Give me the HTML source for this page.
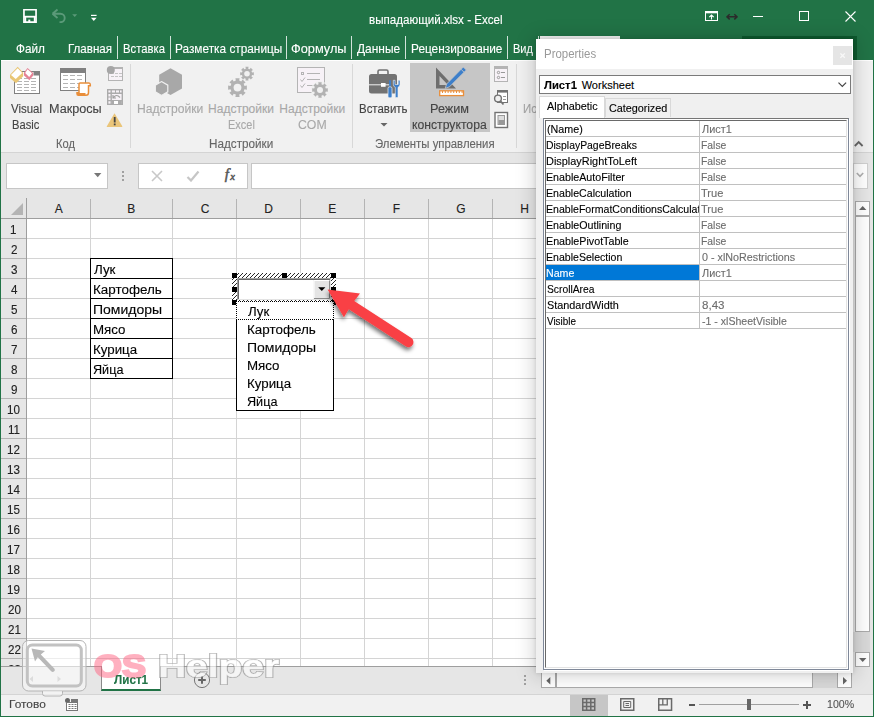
<!DOCTYPE html>
<html lang="ru">
<head>
<meta charset="utf-8">
<title>выпадающий.xlsx - Excel</title>
<style>
*{box-sizing:border-box;margin:0;padding:0}
html,body{width:874px;height:717px;overflow:hidden;background:#217346}
body{font-family:"Liberation Sans",sans-serif;font-size:12px;color:#444}
#app{position:absolute;left:0;top:0;width:874px;height:717px;overflow:hidden;background:#217346}
#app div,#app span,#app svg{position:absolute}
.t{white-space:pre;line-height:1;transform-origin:0 0;display:block;-webkit-text-stroke:0.12px currentColor}

</style>
</head>
<body>
<div id="app">
<!-- title bar -->
<div style="left:0px;top:0px;width:874px;height:60px;background:#217346;"></div>
<svg style="left:23px;top:9px;" width="14" height="14" viewBox="0 0 14 14"><path d="M0.95 0.75h12.1v12.300h-12.1z" fill="none" stroke="#fff" stroke-width="1.700"/><rect x="1" y="6.800" width="12" height="1.800" fill="#fff"/><rect x="1.500" y="8" width="1.700" height="5" fill="#fff"/><rect x="10.800" y="8" width="1.700" height="5" fill="#fff"/><rect x="5.300" y="10.600" width="2" height="2.500" fill="#fff"/></svg>
<svg style="left:51px;top:8px;" width="28" height="15" viewBox="0 0 28 15"><path d="M1.500 5.800 L6.500 1.500 M1.500 5.800 L6.500 10 M2 5.800 H9.500 a4.200 4.200 0 0 1 0 8.400 H8.500" fill="none" stroke="#5b9a79" stroke-width="1.900" stroke-linejoin="round"/><path d="M21.200 6.300h5l-2.500 2.800z" fill="#5b9a79"/></svg>
<svg style="left:90px;top:14px;" width="8" height="8" viewBox="0 0 8 8"><rect x="1" y="0.800" width="5.600" height="1.200" fill="#fff"/><path d="M1 3.700h5.600L3.800 7z" fill="#fff"/></svg>
<span class="t" style="left:368.83px;top:14.00px;font-size:12px;color:#fff;transform:scaleX(0.9672);">выпадающий.xlsx - Excel</span>
<svg style="left:705px;top:11px;" width="13" height="10" viewBox="0 0 13 10"><rect x="0.5" y="0.5" width="12" height="9" fill="none" stroke="#fff" stroke-width="1"/><rect x="0.5" y="0.5" width="12" height="1.800" fill="#fff"/><path d="M6.500 4.200 L6.500 8.500 M4.300 6.200 L6.500 4 L8.700 6.200" fill="none" stroke="#fff" stroke-width="1.1"/></svg>
<svg style="left:726px;top:12px;" width="12" height="9" viewBox="0 0 12 9"><path d="M1.500 4.800H10.500M3.700 2.200L1 4.800L3.700 7.400M8.300 2.200L11 4.800L8.300 7.400" fill="none" stroke="#2b2b2b" stroke-width="1.500"/></svg>
<div style="left:753px;top:16px;width:10px;height:1px;background:#fff;"></div>
<div style="left:799px;top:11px;width:10px;height:10px;border:1px solid #fff;"></div>
<svg style="left:845px;top:11px;" width="11" height="11" viewBox="0 0 11 11"><path d="M0.5 0.5L10.5 10.5M10.5 0.5L0.5 10.5" stroke="#fff" stroke-width="1.1" fill="none"/></svg>
<span class="t" style="left:15.90px;top:42.00px;font-size:13px;color:#fff;transform:scaleX(0.9032);">Файл</span>
<span class="t" style="left:68.11px;top:42.00px;font-size:13px;color:#fff;transform:scaleX(0.8896);">Главная</span>
<span class="t" style="left:122.93px;top:42.00px;font-size:13px;color:#fff;transform:scaleX(0.8681);">Вставка</span>
<span class="t" style="left:175.39px;top:42.00px;font-size:13px;color:#fff;transform:scaleX(0.9095);">Разметка страницы</span>
<span class="t" style="left:291.32px;top:42.00px;font-size:13px;color:#fff;transform:scaleX(0.9818);">Формулы</span>
<span class="t" style="left:357.30px;top:42.00px;font-size:13px;color:#fff;transform:scaleX(0.9191);">Данные</span>
<span class="t" style="left:411.19px;top:42.00px;font-size:13px;color:#fff;transform:scaleX(0.9111);">Рецензирование</span>
<span class="t" style="left:512.95px;top:42.00px;font-size:13px;color:#fff;transform:scaleX(0.8478);">Вид</span>
<div style="left:117px;top:36px;width:1px;height:23px;background:rgba(255,255,255,.8);"></div>
<div style="left:170px;top:36px;width:1px;height:23px;background:rgba(255,255,255,.8);"></div>
<div style="left:286px;top:36px;width:1px;height:23px;background:rgba(255,255,255,.8);"></div>
<div style="left:351px;top:36px;width:1px;height:23px;background:rgba(255,255,255,.8);"></div>
<div style="left:405px;top:36px;width:1px;height:23px;background:rgba(255,255,255,.8);"></div>
<div style="left:507px;top:36px;width:1px;height:23px;background:rgba(255,255,255,.8);"></div>
<!-- ribbon -->
<div style="left:1px;top:60px;width:872px;height:93px;background:#f1f1f1;border-top:1px solid #fff;border-bottom:1px solid #d4d4d4;"></div>
<div style="left:130px;top:64px;width:1px;height:84px;background:#d8d8d8;"></div>
<div style="left:352px;top:64px;width:1px;height:84px;background:#d8d8d8;"></div>
<div style="left:516px;top:64px;width:1px;height:84px;background:#d8d8d8;"></div>
<div style="left:410px;top:63px;width:80px;height:69px;background:#c6c6c6;"></div>
<span class="t" style="left:10.80px;top:103.00px;font-size:12px;color:#444;transform:scaleX(0.9531);">Visual</span>
<span class="t" style="left:11.87px;top:119.00px;font-size:12px;color:#444;transform:scaleX(0.9286);">Basic</span>
<span class="t" style="left:48.75px;top:103.00px;font-size:12px;color:#444;transform:scaleX(1.0510);">Макросы</span>
<span class="t" style="left:55.88px;top:138.00px;font-size:12px;color:#666;transform:scaleX(0.9250);">Код</span>
<span class="t" style="left:136.79px;top:103.00px;font-size:12px;color:#a8a8a8;transform:scaleX(1.0077);">Надстройки</span>
<span class="t" style="left:208.10px;top:103.00px;font-size:12px;color:#a8a8a8;">Надстройки</span>
<span class="t" style="left:227.79px;top:119.00px;font-size:12px;color:#a8a8a8;transform:scaleX(0.9143);">Excel</span>
<span class="t" style="left:279.30px;top:103.00px;font-size:12px;color:#a8a8a8;">Надстройки</span>
<span class="t" style="left:298.30px;top:119.00px;font-size:12px;color:#a8a8a8;transform:scaleX(1.0222);">COM</span>
<span class="t" style="left:208.92px;top:138.00px;font-size:12px;color:#666;transform:scaleX(0.9754);">Надстройки</span>
<span class="t" style="left:358.65px;top:103.00px;font-size:12px;color:#444;transform:scaleX(0.9540);">Вставить</span>
<svg style="left:380px;top:123px;" width="8" height="4" viewBox="0 0 8 4"><path d="M0.5 0h7L4 3.6z" fill="#666"/></svg>
<span class="t" style="left:430.24px;top:103.00px;font-size:12px;color:#444;transform:scaleX(1.0556);">Режим</span>
<span class="t" style="left:411.78px;top:119.00px;font-size:12px;color:#444;transform:scaleX(1.0164);">конструктора</span>
<span class="t" style="left:374.55px;top:138.00px;font-size:12px;color:#666;transform:scaleX(0.9464);">Элементы управления</span>
<span class="t" style="left:523.05px;top:103.00px;font-size:12px;color:#a8a8a8;transform:scaleX(0.9500);">Ис</span>
<svg style="left:0;top:60px" width="540" height="93" viewBox="0 60 540 93"><rect x="14.5" y="71.5" width="25" height="22" fill="#fff" stroke="#808080"/><rect x="33.5" y="71" width="6.5" height="4.5" fill="#808080"/><rect x="17" y="78" width="5" height="1" fill="#b4b4b4"/><rect x="24" y="78" width="5" height="1" fill="#b4b4b4"/><rect x="31" y="78" width="5" height="1" fill="#b4b4b4"/><rect x="17" y="81" width="5" height="1" fill="#b4b4b4"/><rect x="24" y="81" width="5" height="1" fill="#b4b4b4"/><rect x="31" y="81" width="5" height="1" fill="#b4b4b4"/><rect x="17" y="84" width="5" height="1" fill="#b4b4b4"/><rect x="24" y="84" width="5" height="1" fill="#b4b4b4"/><rect x="31" y="84" width="5" height="1" fill="#b4b4b4"/><rect x="17" y="87" width="5" height="1" fill="#b4b4b4"/><rect x="24" y="87" width="5" height="1" fill="#b4b4b4"/><rect x="31" y="87" width="5" height="1" fill="#b4b4b4"/><rect x="17" y="90" width="5" height="1" fill="#b4b4b4"/><rect x="24" y="90" width="5" height="1" fill="#b4b4b4"/><rect x="31" y="90" width="5" height="1" fill="#b4b4b4"/><path d="M17.700 66.800 L23.200 72.800 V76.300 L16 83.200 L10 78 V74.800 Z" fill="#e9c675"/><path d="M17.700 68.200 L22.200 73 L15.700 79 L11 75 Z" fill="#fff"/><path d="M27.500 68 L33.200 72.900 V75.500 L29.400 80.300 L24 75.500 V72.600 Z" fill="#e58295"/><path d="M27.500 69.300 L32 73.200 L29.200 76.900 L25.200 73 Z" fill="#fff"/><rect x="60.5" y="68.5" width="25" height="22" fill="#fff" stroke="#808080"/><rect x="60" y="68" width="26" height="5" fill="#808080"/><rect x="63" y="75" width="5" height="1" fill="#b4b4b4"/><rect x="70" y="75" width="5" height="1" fill="#b4b4b4"/><rect x="77" y="75" width="5" height="1" fill="#b4b4b4"/><rect x="63" y="79" width="5" height="1" fill="#b4b4b4"/><rect x="70" y="79" width="5" height="1" fill="#b4b4b4"/><rect x="77" y="79" width="5" height="1" fill="#b4b4b4"/><rect x="63" y="83" width="5" height="1" fill="#b4b4b4"/><rect x="70" y="83" width="5" height="1" fill="#b4b4b4"/><rect x="77" y="83" width="5" height="1" fill="#b4b4b4"/><rect x="63" y="87" width="5" height="1" fill="#b4b4b4"/><rect x="70" y="87" width="5" height="1" fill="#b4b4b4"/><rect x="77" y="87" width="5" height="1" fill="#b4b4b4"/><path d="M80 83 H89 Q90.3 83 90.3 84.8 V85.8 H88.500 V92.500 Q88.500 95.300 86 95.300 H78.300 Q77 95.300 77 93.800 V92.700 H79 V84.500 Q79 83 80 83 Z" fill="#fff" stroke="#e98e3a" stroke-width="1.500"/><path d="M77 93 h8.500 v2 h-8 z" fill="#e98e3a"/><rect x="108.5" y="67.5" width="14" height="13" fill="#f7f2f7" stroke="#b4b4b4"/><rect x="113" y="67" width="10" height="2" fill="#b4b4b4"/><rect x="111" y="73" width="3" height="1" fill="#c4c4c4"/><rect x="115" y="73" width="3" height="1" fill="#c4c4c4"/><rect x="119" y="73" width="3" height="1" fill="#c4c4c4"/><rect x="111" y="76" width="3" height="1" fill="#c4c4c4"/><rect x="115" y="76" width="3" height="1" fill="#c4c4c4"/><rect x="119" y="76" width="3" height="1" fill="#c4c4c4"/><circle cx="110.8" cy="70" r="4" fill="#a6a6a6"/><rect x="107.700" y="89.700" width="14.600" height="14.600" fill="#f7f2f7" stroke="#ababab" stroke-width="1.400"/><path d="M107 93.2h16M111.2 89v16M107 100.6h16" stroke="#ababab" stroke-width="1.400" fill="none"/><path d="M115.5 89v4M119.500 89v4M107 97h4" stroke="#ababab" fill="none"/><rect x="111.800" y="101" width="10" height="3" fill="#ababab"/><rect x="114" y="101" width="4" height="3" fill="#fff"/><path d="M113.5 97.5 q3 -4 6.5 0 M113 95 v3 h3" stroke="#a0a0a0" fill="none" stroke-width="1.2"/><path d="M114.5 113.3 L122.3 126.3 Q122.6 127 121.8 127 H107.2 Q106.4 127 106.8 126.3 Z" fill="#eac57a"/><rect x="113.8" y="117" width="1.8" height="5.5" fill="#444"/><rect x="113.8" y="123.5" width="1.8" height="1.8" fill="#444"/><path d="M170.5 68.3 L182 74.8 V88.5 L170.5 95 L159.2 88.5 V74.8 Z" fill="#a8a8a8"/><path d="M161.5 81.6 L167.8 85.2 V91.8 L161.5 95.4 L155.3 91.8 V85.2 Z" fill="#a8a8a8" stroke="#f1f1f1" stroke-width="1.2"/><polygon points="246.87,85.51 246.87,89.69 244.50,89.28 243.64,91.36 245.61,92.74 242.64,95.71 241.26,93.74 239.18,94.60 239.59,96.97 235.41,96.97 235.82,94.60 233.74,93.74 232.36,95.71 229.39,92.74 231.36,91.36 230.50,89.28 228.13,89.69 228.13,85.51 230.50,85.92 231.36,83.84 229.39,82.46 232.36,79.49 233.74,81.46 235.82,80.60 235.41,78.23 239.59,78.23 239.18,80.60 241.26,81.46 242.64,79.49 245.61,82.46 243.64,83.84 244.50,85.92" fill="#b2b2b2"/><circle cx="237.5" cy="87.6" r="3.9" fill="#f1f1f1"/><polygon points="253.83,72.17 253.83,75.23 252.06,74.91 251.43,76.42 252.91,77.45 250.75,79.61 249.72,78.13 248.21,78.76 248.53,80.53 245.47,80.53 245.79,78.76 244.28,78.13 243.25,79.61 241.09,77.45 242.57,76.42 241.94,74.91 240.17,75.23 240.17,72.17 241.94,72.49 242.57,70.98 241.09,69.95 243.25,67.79 244.28,69.27 245.79,68.64 245.47,66.87 248.53,66.87 248.21,68.64 249.72,69.27 250.75,67.79 252.91,69.95 251.43,70.98 252.06,72.49" fill="#b2b2b2"/><circle cx="247" cy="73.7" r="2.8" fill="#f1f1f1"/><rect x="297.5" y="67.5" width="27" height="25" fill="#f7f2f7" stroke="#b4b4b4"/><rect x="301.5" y="72.5" width="2" height="2" fill="none" stroke="#b4b4b4"/><path d="M307 73.5h13M307 79.5h13M307 85.5h6" stroke="#b4b4b4"/><path d="M300.5 79.5l1.5 2l3-4M300.5 85.5l1.5 2l3-4" stroke="#b4b4b4" fill="none"/><circle cx="320" cy="90" r="9" fill="#f1f1f1"/><polygon points="327.81,88.25 327.81,91.75 325.83,91.40 325.12,93.13 326.75,94.29 324.29,96.75 323.13,95.12 321.40,95.83 321.75,97.81 318.25,97.81 318.60,95.83 316.87,95.12 315.71,96.75 313.25,94.29 314.88,93.13 314.17,91.40 312.19,91.75 312.19,88.25 314.17,88.60 314.88,86.87 313.25,85.71 315.71,83.25 316.87,84.88 318.60,84.17 318.25,82.19 321.75,82.19 321.40,84.17 323.13,84.88 324.29,83.25 326.75,85.71 325.12,86.87 325.83,88.60" fill="#b2b2b2"/><circle cx="320" cy="90" r="3" fill="#f1f1f1"/><path d="M378 74.5 V71.5 Q378 70 379.5 70 H386.5 Q388 70 388 71.5 V74.5" fill="none" stroke="#737373" stroke-width="1.6"/><rect x="369" y="74" width="28" height="19.5" rx="2.5" fill="#737373"/><rect x="369" y="84.3" width="21" height="1" fill="#f1f1f1"/><rect x="381" y="83" width="4.6" height="3.8" fill="#fff"/><rect x="386.8" y="80" width="14" height="18" fill="#f1f1f1" opacity="0"/><rect x="387" y="80" width="14" height="14" fill="#f1f1f1" opacity="0"/><path d="M390 80.300 V87.500" stroke="#3d7fca" stroke-width="1.800"/><rect x="388" y="86.800" width="4" height="11" rx="1.600" fill="#3d7fca" stroke="#f1f1f1" stroke-width="0.700"/><path d="M393.3 80.300 V84.300 Q393.3 86.800 395.3 87.300 V97.600 H398 V87.300 Q400 86.800 400 84.300 V80.300 H398.2 V84.500 H395.1 V80.300 Z" fill="#3d7fca" stroke="#f1f1f1" stroke-width="0.600"/><path d="M436 67.5 L456 88.5 H436 Z M439.5 76 V85 H448 Z" fill="#6e6e6e" fill-rule="evenodd"/><path d="M463.3 67 L466.3 70 L449.5 86.8 L445.2 88.4 L446.6 84 Z" fill="#3d7fca" stroke="#c6c6c6" stroke-width="0.8"/><path d="M461.2 69.4 L464 72.2" stroke="#c6c6c6" stroke-width="0.9"/><rect x="439.7" y="90.8" width="23.8" height="4.8" fill="#fff" stroke="#e98e3a" stroke-width="1.3"/><rect x="442.0" y="91" width="1" height="2" fill="#e98e3a"/><rect x="444.8" y="91" width="1" height="2" fill="#e98e3a"/><rect x="447.6" y="91" width="1" height="2" fill="#e98e3a"/><rect x="450.4" y="91" width="1" height="2" fill="#e98e3a"/><rect x="453.2" y="91" width="1" height="2" fill="#e98e3a"/><rect x="456.0" y="91" width="1" height="2" fill="#e98e3a"/><rect x="458.8" y="91" width="1" height="2" fill="#e98e3a"/><rect x="461.6" y="91" width="1" height="2" fill="#e98e3a"/><rect x="494.5" y="66.5" width="13" height="15" fill="#f7f2f7" stroke="#b4b4b4"/><rect x="494" y="66" width="14" height="3" fill="#b4b4b4"/><circle cx="498.5" cy="72.5" r="1.2" fill="none" stroke="#999"/><circle cx="498.5" cy="77.5" r="1.2" fill="none" stroke="#999"/><path d="M501 72.5h4M501 77.5h4" stroke="#999"/><rect x="497.5" y="90.5" width="10" height="12" fill="#fff" stroke="#737373"/><rect x="497" y="90" width="11" height="2.6" fill="#737373"/><path d="M503 96.5h3M503 99.5h3" stroke="#999"/><circle cx="498" cy="98.5" r="3.4" fill="#f1f1f1" stroke="#737373" stroke-width="1.4"/><path d="M500.5 101.2 L503.5 104.5" stroke="#737373" stroke-width="1.8"/><rect x="495" y="112.5" width="12.5" height="15" fill="#fff" stroke="#737373" stroke-width="1.4"/><rect x="498" y="115.5" width="6.5" height="9" fill="#ddd" stroke="#999"/><rect x="498.5" y="120" width="5.5" height="4" fill="#999"/></svg>
<!-- formula bar -->
<div style="left:1px;top:153px;width:872px;height:45px;background:#e6e6e6;"></div>
<div style="left:6px;top:163px;width:102px;height:26px;background:#fff;border:1px solid #c6c6c6;"></div>
<svg style="left:94px;top:173px;" width="8" height="5" viewBox="0 0 8 5"><path d="M0 0h7.4L3.7 4.2z" fill="#777"/></svg>
<div style="left:122px;top:171px;width:2px;height:2px;background:#a0a0a0;"></div>
<div style="left:122px;top:175px;width:2px;height:2px;background:#a0a0a0;"></div>
<div style="left:122px;top:179px;width:2px;height:2px;background:#a0a0a0;"></div>
<div style="left:138px;top:163px;width:110px;height:26px;background:#fff;border:1px solid #c6c6c6;"></div>
<svg style="left:151px;top:170px;" width="12" height="12" viewBox="0 0 12 12"><path d="M1 1L11 11M11 1L1 11" stroke="#c8c8c8" stroke-width="1.6" fill="none"/></svg>
<svg style="left:186px;top:170px;" width="14" height="12" viewBox="0 0 14 12"><path d="M1.5 7L5 10.5L12.5 1.5" stroke="#c6c6c6" stroke-width="2.2" fill="none"/></svg>
<span class="t" style="left:224.80px;top:167.00px;font-size:15px;color:#555;font-style:italic;font-family:'Liberation Serif',serif;-webkit-text-stroke:0.5px #555;">f</span>
<span class="t" style="left:230.30px;top:172.00px;font-size:10.5px;color:#555;font-style:italic;font-family:'Liberation Serif',serif;-webkit-text-stroke:0.5px #555;">x</span>
<div style="left:251px;top:163px;width:600px;height:26px;background:#fff;border:1px solid #c6c6c6;"></div>
<div style="left:853px;top:163px;width:15px;height:26px;background:#fff;border:1px solid #d0d0d0;"></div>
<svg style="left:856px;top:172px;" width="8" height="6" viewBox="0 0 8 6"><path d="M0.8 1L4 4.4L7.2 1" stroke="#b0b0b0" stroke-width="1.6" fill="none"/></svg>
<svg style="left:854px;top:140px;" width="10" height="7" viewBox="0 0 10 7"><path d="M0.800 6L4.700 2L8.600 6" stroke="#666" stroke-width="1.8" fill="none"/></svg>
<!-- grid -->
<div style="left:1px;top:198px;width:872px;height:468px;background:#fff;"></div>
<div style="left:1px;top:198px;width:872px;height:20px;background:#e6e6e6;"></div>
<div style="left:1px;top:218px;width:25px;height:448px;background:#e6e6e6;"></div>
<div style="left:1px;top:218px;width:872px;height:1px;background:#9e9e9e;"></div>
<div style="left:26px;top:198px;width:1px;height:468px;background:#9e9e9e;"></div>
<svg style="left:11px;top:203px;" width="12" height="12" viewBox="0 0 12 12"><path d="M12 0V12H0z" fill="#b4b4b4"/></svg>
<div style="left:90px;top:199px;width:1px;height:19px;background:#b4b4b4;"></div>
<div style="left:90px;top:219px;width:1px;height:447px;background:#d4d4d4;"></div>
<div style="left:172px;top:199px;width:1px;height:19px;background:#b4b4b4;"></div>
<div style="left:172px;top:219px;width:1px;height:447px;background:#d4d4d4;"></div>
<div style="left:236px;top:199px;width:1px;height:19px;background:#b4b4b4;"></div>
<div style="left:236px;top:219px;width:1px;height:447px;background:#d4d4d4;"></div>
<div style="left:300px;top:199px;width:1px;height:19px;background:#b4b4b4;"></div>
<div style="left:300px;top:219px;width:1px;height:447px;background:#d4d4d4;"></div>
<div style="left:364px;top:199px;width:1px;height:19px;background:#b4b4b4;"></div>
<div style="left:364px;top:219px;width:1px;height:447px;background:#d4d4d4;"></div>
<div style="left:428px;top:199px;width:1px;height:19px;background:#b4b4b4;"></div>
<div style="left:428px;top:219px;width:1px;height:447px;background:#d4d4d4;"></div>
<div style="left:492px;top:199px;width:1px;height:19px;background:#b4b4b4;"></div>
<div style="left:492px;top:219px;width:1px;height:447px;background:#d4d4d4;"></div>
<span class="t" style="left:54.80px;top:203.00px;font-size:12px;color:#222;">A</span>
<span class="t" style="left:127.30px;top:203.00px;font-size:12px;color:#222;">B</span>
<span class="t" style="left:200.80px;top:203.00px;font-size:12px;color:#222;">C</span>
<span class="t" style="left:264.30px;top:203.00px;font-size:12px;color:#222;">D</span>
<span class="t" style="left:328.30px;top:203.00px;font-size:12px;color:#222;">E</span>
<span class="t" style="left:392.80px;top:203.00px;font-size:12px;color:#222;">F</span>
<span class="t" style="left:456.30px;top:203.00px;font-size:12px;color:#222;">G</span>
<span class="t" style="left:520.30px;top:203.00px;font-size:12px;color:#222;">H</span>
<div style="left:1px;top:238px;width:25px;height:1px;background:#b4b4b4;"></div>
<div style="left:27px;top:238px;width:845px;height:1px;background:#d4d4d4;"></div>
<span class="t" style="left:10.22px;top:224.00px;font-size:12px;color:#222;transform:scaleX(0.9700);">1</span>
<div style="left:1px;top:258px;width:25px;height:1px;background:#b4b4b4;"></div>
<div style="left:27px;top:258px;width:845px;height:1px;background:#d4d4d4;"></div>
<span class="t" style="left:11.19px;top:244.00px;font-size:12px;color:#222;transform:scaleX(0.9700);">2</span>
<div style="left:1px;top:278px;width:25px;height:1px;background:#b4b4b4;"></div>
<div style="left:27px;top:278px;width:845px;height:1px;background:#d4d4d4;"></div>
<span class="t" style="left:10.71px;top:264.00px;font-size:12px;color:#222;transform:scaleX(0.9700);">3</span>
<div style="left:1px;top:298px;width:25px;height:1px;background:#b4b4b4;"></div>
<div style="left:27px;top:298px;width:845px;height:1px;background:#d4d4d4;"></div>
<span class="t" style="left:10.71px;top:284.00px;font-size:12px;color:#222;transform:scaleX(0.9700);">4</span>
<div style="left:1px;top:318px;width:25px;height:1px;background:#b4b4b4;"></div>
<div style="left:27px;top:318px;width:845px;height:1px;background:#d4d4d4;"></div>
<span class="t" style="left:10.71px;top:304.00px;font-size:12px;color:#222;transform:scaleX(0.9700);">5</span>
<div style="left:1px;top:338px;width:25px;height:1px;background:#b4b4b4;"></div>
<div style="left:27px;top:338px;width:845px;height:1px;background:#d4d4d4;"></div>
<span class="t" style="left:11.19px;top:324.00px;font-size:12px;color:#222;transform:scaleX(0.9700);">6</span>
<div style="left:1px;top:358px;width:25px;height:1px;background:#b4b4b4;"></div>
<div style="left:27px;top:358px;width:845px;height:1px;background:#d4d4d4;"></div>
<span class="t" style="left:11.19px;top:344.00px;font-size:12px;color:#222;transform:scaleX(0.9700);">7</span>
<div style="left:1px;top:378px;width:25px;height:1px;background:#b4b4b4;"></div>
<div style="left:27px;top:378px;width:845px;height:1px;background:#d4d4d4;"></div>
<span class="t" style="left:10.71px;top:364.00px;font-size:12px;color:#222;transform:scaleX(0.9700);">8</span>
<div style="left:1px;top:398px;width:25px;height:1px;background:#b4b4b4;"></div>
<div style="left:27px;top:398px;width:845px;height:1px;background:#d4d4d4;"></div>
<span class="t" style="left:11.19px;top:384.00px;font-size:12px;color:#222;transform:scaleX(0.9700);">9</span>
<div style="left:1px;top:418px;width:25px;height:1px;background:#b4b4b4;"></div>
<div style="left:27px;top:418px;width:845px;height:1px;background:#d4d4d4;"></div>
<span class="t" style="left:7.31px;top:404.00px;font-size:12px;color:#222;transform:scaleX(0.9700);">10</span>
<div style="left:1px;top:438px;width:25px;height:1px;background:#b4b4b4;"></div>
<div style="left:27px;top:438px;width:845px;height:1px;background:#d4d4d4;"></div>
<span class="t" style="left:7.80px;top:424.00px;font-size:12px;color:#222;transform:scaleX(0.9700);">11</span>
<div style="left:1px;top:458px;width:25px;height:1px;background:#b4b4b4;"></div>
<div style="left:27px;top:458px;width:845px;height:1px;background:#d4d4d4;"></div>
<span class="t" style="left:7.31px;top:444.00px;font-size:12px;color:#222;transform:scaleX(0.9700);">12</span>
<div style="left:1px;top:478px;width:25px;height:1px;background:#b4b4b4;"></div>
<div style="left:27px;top:478px;width:845px;height:1px;background:#d4d4d4;"></div>
<span class="t" style="left:7.31px;top:464.00px;font-size:12px;color:#222;transform:scaleX(0.9700);">13</span>
<div style="left:1px;top:498px;width:25px;height:1px;background:#b4b4b4;"></div>
<div style="left:27px;top:498px;width:845px;height:1px;background:#d4d4d4;"></div>
<span class="t" style="left:7.31px;top:484.00px;font-size:12px;color:#222;transform:scaleX(0.9700);">14</span>
<div style="left:1px;top:518px;width:25px;height:1px;background:#b4b4b4;"></div>
<div style="left:27px;top:518px;width:845px;height:1px;background:#d4d4d4;"></div>
<span class="t" style="left:7.31px;top:504.00px;font-size:12px;color:#222;transform:scaleX(0.9700);">15</span>
<div style="left:1px;top:538px;width:25px;height:1px;background:#b4b4b4;"></div>
<div style="left:27px;top:538px;width:845px;height:1px;background:#d4d4d4;"></div>
<span class="t" style="left:7.31px;top:524.00px;font-size:12px;color:#222;transform:scaleX(0.9700);">16</span>
<div style="left:1px;top:558px;width:25px;height:1px;background:#b4b4b4;"></div>
<div style="left:27px;top:558px;width:845px;height:1px;background:#d4d4d4;"></div>
<span class="t" style="left:7.31px;top:544.00px;font-size:12px;color:#222;transform:scaleX(0.9700);">17</span>
<div style="left:1px;top:578px;width:25px;height:1px;background:#b4b4b4;"></div>
<div style="left:27px;top:578px;width:845px;height:1px;background:#d4d4d4;"></div>
<span class="t" style="left:7.31px;top:564.00px;font-size:12px;color:#222;transform:scaleX(0.9700);">18</span>
<div style="left:1px;top:598px;width:25px;height:1px;background:#b4b4b4;"></div>
<div style="left:27px;top:598px;width:845px;height:1px;background:#d4d4d4;"></div>
<span class="t" style="left:7.31px;top:584.00px;font-size:12px;color:#222;transform:scaleX(0.9700);">19</span>
<div style="left:1px;top:618px;width:25px;height:1px;background:#b4b4b4;"></div>
<div style="left:27px;top:618px;width:845px;height:1px;background:#d4d4d4;"></div>
<span class="t" style="left:7.80px;top:604.00px;font-size:12px;color:#222;transform:scaleX(0.9700);">20</span>
<div style="left:1px;top:638px;width:25px;height:1px;background:#b4b4b4;"></div>
<div style="left:27px;top:638px;width:845px;height:1px;background:#d4d4d4;"></div>
<span class="t" style="left:7.80px;top:624.00px;font-size:12px;color:#222;transform:scaleX(0.9700);">21</span>
<div style="left:1px;top:658px;width:25px;height:1px;background:#b4b4b4;"></div>
<div style="left:27px;top:658px;width:845px;height:1px;background:#d4d4d4;"></div>
<span class="t" style="left:7.80px;top:644.00px;font-size:12px;color:#222;transform:scaleX(0.9700);">22</span>
<div style="left:1px;top:659px;width:25px;height:7px;overflow:hidden"><span class="t" style="left:6.79px;top:5.00px;font-size:12px;color:#222;transform:scaleX(0.9700);">23</span></div>
<div style="left:90px;top:258px;width:83px;height:121px;background:#fff;border:1px solid #000;"></div>
<div style="left:90px;top:278px;width:83px;height:1px;background:#000;"></div>
<div style="left:90px;top:298px;width:83px;height:1px;background:#000;"></div>
<div style="left:90px;top:318px;width:83px;height:1px;background:#000;"></div>
<div style="left:90px;top:338px;width:83px;height:1px;background:#000;"></div>
<div style="left:90px;top:358px;width:83px;height:1px;background:#000;"></div>
<span class="t" style="left:94.10px;top:264.00px;font-size:12.5px;color:#000;transform:scaleX(1.0700);">Лук</span>
<span class="t" style="left:93.03px;top:284.00px;font-size:12.5px;color:#000;transform:scaleX(1.0746);">Картофель</span>
<span class="t" style="left:92.98px;top:304.00px;font-size:12.5px;color:#000;transform:scaleX(1.1200);">Помидоры</span>
<span class="t" style="left:93.03px;top:324.00px;font-size:12.5px;color:#000;transform:scaleX(1.0655);">Мясо</span>
<span class="t" style="left:93.04px;top:344.00px;font-size:12.5px;color:#000;transform:scaleX(1.0634);">Курица</span>
<span class="t" style="left:93.09px;top:364.00px;font-size:12.5px;color:#000;transform:scaleX(1.0103);">Яйца</span>
<svg style="left:0;top:0" width="540" height="430" viewBox="0 0 540 430"><defs><pattern id="hat" width="4" height="4" patternUnits="userSpaceOnUse"><rect width="4" height="4" fill="#fff"/><path d="M-1 1L1 -1M0 4L4 0M3 5L5 3" stroke="#000" stroke-width="0.85"/></pattern></defs><rect x="232" y="273" width="104" height="32" fill="url(#hat)"/><rect x="237" y="278" width="94" height="22" fill="#fff"/><rect x="237.5" y="278.5" width="93" height="21" fill="#fff" stroke="#a0a0a0"/><path d="M238.5 299 V279.5 H330" fill="none" stroke="#696969"/><path d="M238 299.5 H330.5 V279" fill="none" stroke="#e3e3e3"/><rect x="313.5" y="280" width="16" height="19" fill="#e4e4e4"/><path d="M314 298.5 V280.5 H329" fill="none" stroke="#fff"/><path d="M314 298.5 H329.5 V280.5" fill="none" stroke="#8a8a8a"/><path d="M318.2 287.3 H325.4 L321.8 291 Z" fill="#000"/><rect x="232" y="273" width="5" height="5" fill="#000"/><rect x="282" y="273" width="5" height="5" fill="#000"/><rect x="331" y="273" width="5" height="5" fill="#000"/><rect x="232" y="287" width="5" height="5" fill="#000"/><rect x="331" y="287" width="5" height="5" fill="#000"/><rect x="232" y="300" width="5" height="5" fill="#000"/><rect x="331" y="300" width="5" height="5" fill="#000"/><rect x="236.5" y="301.5" width="97" height="109" fill="#fff" stroke="#000"/><rect x="236.5" y="301.5" width="97" height="18" fill="none" stroke="#fff"/><path d="M236 301.5H334M236 319.5H334M236.5 301V320M333.5 301V320" fill="none" stroke="#000" stroke-dasharray="1 1" shape-rendering="crispEdges"/></svg>
<span class="t" style="left:248.30px;top:306.00px;font-size:12.5px;color:#000;transform:scaleX(1.0600);">Лук</span>
<span class="t" style="left:247.23px;top:324.00px;font-size:12.5px;color:#000;transform:scaleX(1.0746);">Картофель</span>
<span class="t" style="left:247.18px;top:342.00px;font-size:12.5px;color:#000;transform:scaleX(1.1200);">Помидоры</span>
<span class="t" style="left:247.23px;top:360.00px;font-size:12.5px;color:#000;transform:scaleX(1.0655);">Мясо</span>
<span class="t" style="left:247.24px;top:378.00px;font-size:12.5px;color:#000;transform:scaleX(1.0634);">Курица</span>
<span class="t" style="left:247.29px;top:396.00px;font-size:12.5px;color:#000;transform:scaleX(1.0103);">Яйца</span>
<svg style="left:300px;top:260px" width="140" height="110" viewBox="300 260 140 110"><defs><filter id="ash" x="-20%" y="-20%" width="140%" height="150%"><feGaussianBlur in="SourceAlpha" stdDeviation="2"/><feOffset dx="-1" dy="3"/><feComponentTransfer><feFuncA type="linear" slope="0.55"/></feComponentTransfer><feMerge><feMergeNode/><feMergeNode in="SourceGraphic"/></feMerge></filter></defs><path d="M327.6 289.5 L360.0 293.6 L354.2 300.9 L411.4 338.1 A5.0 5.0 0 0 1 406.0 346.5 L348.8 309.2 L343.9 317.2 Z" fill="#f94144" filter="url(#ash)"/></svg>
<!-- bottom -->
<div style="left:1px;top:666px;width:872px;height:28px;background:#e6e6e6;"></div>
<div style="left:1px;top:666px;width:852px;height:1px;background:#9e9e9e;"></div>
<div style="left:101px;top:666px;width:60px;height:25px;background:#fff;border-bottom:2px solid #217346;border-left:1px solid #8a8a8a;border-right:1px solid #8a8a8a;"></div>
<span class="t" style="left:113.70px;top:674.00px;font-size:12px;color:#217346;font-weight:700;transform:scaleX(0.9743);">Лист1</span>
<svg style="left:193px;top:671px;" width="18" height="18" viewBox="0 0 18 18"><circle cx="9" cy="9" r="7.6" fill="none" stroke="#777" stroke-width="1"/><path d="M9 5.2v7.6M5.2 9h7.6" stroke="#666" stroke-width="2"/></svg>
<div style="left:524px;top:675px;width:2px;height:2px;background:#a0a0a0;"></div>
<div style="left:524px;top:679px;width:2px;height:2px;background:#a0a0a0;"></div>
<div style="left:524px;top:683px;width:2px;height:2px;background:#a0a0a0;"></div>
<div style="left:541px;top:672px;width:15px;height:16px;background:#fff;border:1px solid #ababab;"></div>
<div style="left:556px;top:672px;width:257px;height:16px;background:#fff;border:1px solid #ababab;"></div>
<div style="left:813px;top:672px;width:24px;height:16px;background:#d9d9d9;"></div>
<div style="left:837px;top:672px;width:15px;height:16px;background:#fff;border:1px solid #ababab;"></div>
<svg style="left:546px;top:677px;" width="5" height="8" viewBox="0 0 5 8"><path d="M4.300 0v7.400L0.300 3.700z" fill="#666"/></svg>
<svg style="left:843px;top:677px;" width="5" height="8" viewBox="0 0 5 8"><path d="M0 0v7.400L4 3.700z" fill="#666"/></svg>
<div style="left:853px;top:199px;width:20px;height:467px;background:#e6e6e6;"></div>
<div style="left:853px;top:632px;width:17px;height:20px;background:#d9d9d9;"></div>
<div style="left:855px;top:201px;width:15px;height:15px;background:#fff;border:1px solid #ababab;"></div>
<div style="left:855px;top:216px;width:15px;height:416px;background:#fff;border:1px solid #ababab;"></div>
<div style="left:855px;top:652px;width:15px;height:15px;background:#fff;border:1px solid #ababab;"></div>
<svg style="left:859px;top:206px;" width="8" height="4" viewBox="0 0 8 4"><path d="M0 4h7.400L3.700 0z" fill="#666"/></svg>
<svg style="left:859px;top:658px;" width="8" height="4" viewBox="0 0 8 4"><path d="M0 0h7.400L3.700 4z" fill="#666"/></svg>
<div style="left:1px;top:694px;width:872px;height:22px;background:#f1f1f1;border-top:1px solid #d4d4d4;"></div>
<span class="t" style="left:8.72px;top:699.00px;font-size:11px;color:#444;transform:scaleX(1.0818);">Готово</span>
<svg style="left:65px;top:698px;" width="13" height="13" viewBox="0 0 13 13"><rect x="0" y="0" width="5" height="5" rx="2.5" fill="#666"/><rect x="6" y="1" width="7" height="3" fill="#777"/><rect x="1.5" y="4.5" width="11" height="8" fill="#fff" stroke="#777"/><path d="M3.500 6.500h2M6.500 6.500h2M9.500 6.500h2M3.500 8.500h2M6.500 8.500h2M9.500 8.500h2M3.500 10.500h2M6.500 10.500h2M9.500 10.500h2" stroke="#777"/></svg>
<div style="left:570px;top:695px;width:38px;height:21px;background:#c6c6c6;"></div>
<svg style="left:582px;top:698px;" width="14" height="13" viewBox="0 0 14 13"><path d="M0.75 0.75h12v11.5h-12zM0.75 4.5h12M0.75 8.5h12M4.6 0.75v11.5M8.8 0.75v11.5" fill="none" stroke="#6a6a6a" stroke-width="1.5"/></svg>
<svg style="left:620px;top:698px;" width="15" height="13" viewBox="0 0 15 13"><path d="M0.75 0.75h13v11.500h-13z" fill="none" stroke="#6a6a6a" stroke-width="1.5"/><path d="M3.700 3.500h7v6h-7zM5.500 5.500h3.500M5.500 7.500h3.500" fill="none" stroke="#6a6a6a"/></svg>
<svg style="left:658px;top:698px;" width="15" height="13" viewBox="0 0 15 13"><path d="M0.75 0.75h12.800v11.500h-12.800z" fill="none" stroke="#6a6a6a" stroke-width="1.5"/><path d="M0.75 6.800h8.500V0.75M4.800 0.75v6" fill="none" stroke="#6a6a6a" stroke-width="1.3"/></svg>
<div style="left:689px;top:704px;width:6px;height:2px;background:#555;"></div>
<div style="left:699px;top:704px;width:100px;height:1px;background:#a0a0a0;"></div>
<div style="left:747px;top:699px;width:4px;height:11px;background:#666;"></div>
<svg style="left:803px;top:701px;" width="8" height="8" viewBox="0 0 8 8"><path d="M4 0v8M0 4h8" stroke="#555" stroke-width="2"/></svg>
<span class="t" style="left:827.34px;top:699.00px;font-size:11px;color:#555;transform:scaleX(0.9630);">100%</span>
<svg style="left:0;top:630px" width="300" height="87" viewBox="0 630 300 87"><rect x="22.5" y="640.5" width="63.5" height="50.5" rx="6" fill="rgba(255,255,255,.45)" stroke="#b4b4b4" stroke-width="1"/><rect x="27.3" y="645" width="54" height="41" rx="5" fill="rgba(255,255,255,.25)" stroke="#c2c2c2" stroke-width="3"/><path d="M42.5 691 v2.5 q0 2.5 2.5 2.5 h15 q2.500 0 2.5 -2.5 v-2.500" fill="rgba(255,255,255,.5)" stroke="#b4b4b4"/><path d="M31.5 648.5 L45 651 L40.8 654.5 L54.5 668.8 Q55.5 670.5 54 671.6 Q52.5 672.6 51.2 671.3 L37.8 657.3 L35 661.5 Z" fill="#b8b8b8"/><path d="M33 676 L29.500 679 L33 682 Z M57.500 676 L61 679 L57.500 682 Z" fill="#dcdcdc"/></svg>
<div style="left:0;top:0;width:300px;height:717px;opacity:.5"><span class="t" style="left:94.46px;top:651.00px;font-size:31.5px;color:#ff6482;font-weight:700;transform:scaleX(1.1386);-webkit-text-stroke:2.2px #ff6482;">OS</span></div>
<div style="left:0;top:0;width:300px;height:717px;opacity:.62"><span class="t" style="left:157.83px;top:651.00px;font-size:31.5px;color:#8c8c8c;font-weight:700;transform:scaleX(1.2354);-webkit-text-stroke:2.2px #8c8c8c;">Helper</span><span class="t" style="left:157.83px;top:651.00px;font-size:31.5px;color:#fff;font-weight:700;transform:scaleX(1.2354);-webkit-text-stroke:0.4px #fff;">Helper</span></div>
<!-- properties panel -->
<div style="left:538px;top:36px;width:1px;height:23px;background:rgba(255,255,255,.8);"></div>
<div style="left:540px;top:36px;width:80px;height:24px;background:#f4f4f4;"></div>
<div style="left:742px;top:36px;width:115px;height:24px;background:#0e5a2f;"></div>
<div style="left:536px;top:39px;width:317px;height:634px;background:#f0f0f0;box-shadow:0 0 4px 0 rgba(0,0,0,.13),0 1px 18px 2px rgba(0,0,0,.18);"></div>
<div style="left:536px;top:39px;width:317px;height:30px;background:#fff;"></div>
<span class="t" style="left:544.05px;top:48.00px;font-size:12px;color:#999;transform:scaleX(0.9527);-webkit-text-stroke:0;">Properties</span>
<div style="left:833px;top:46px;width:19px;height:19px;background:#e5e5e5;"></div>
<svg style="left:840px;top:53px;" width="6" height="6" viewBox="0 0 6 6"><path d="M0.400 0.400L4.800 4.800M4.800 0.400L0.400 4.800" stroke="#f8f8f8" stroke-width="1.300" fill="none"/></svg>
<div style="left:539px;top:75px;width:312px;height:19px;background:#fff;border:1px solid #7a7a7a;"></div>
<span class="t" style="left:543.70px;top:80.00px;font-size:11px;color:#000;font-weight:700;transform:scaleX(1.0250);">Лист1</span>
<span class="t" style="left:581.70px;top:80.00px;font-size:11px;color:#000;">Worksheet</span>
<svg style="left:838px;top:82px;" width="9" height="6" viewBox="0 0 9 6"><path d="M0.500 0.700L4.300 4.500L8.100 0.700" stroke="#444" stroke-width="1.200" fill="none"/></svg>
<div style="left:605px;top:98px;width:66px;height:19px;background:#f0f0f0;border:1px solid #d9d9d9;border-bottom:none;"></div>
<div style="left:539px;top:96px;width:66px;height:22px;background:#fff;border:1px solid #d9d9d9;border-bottom:none;"></div>
<span class="t" style="left:546.80px;top:101.00px;font-size:11px;color:#000;transform:scaleX(0.9863);">Alphabetic</span>
<span class="t" style="left:608.80px;top:103.00px;font-size:11px;color:#000;transform:scaleX(0.9831);">Categorized</span>
<div style="left:543px;top:118px;width:306px;height:552px;background:#fff;border:1px solid #7f8899;border-top-color:#767676;box-shadow:1px 1px 0 #fff;"></div>
<div style="left:545px;top:120px;width:302px;height:548px;background:#fff;border:1px solid #e3e3e3;border-left-color:#6a6a6a;border-top-color:#6a6a6a;"></div>
<div style="left:699px;top:121px;width:1px;height:208px;background:#c0c0c0;"></div>
<div style="left:546px;top:136px;width:300px;height:1px;background:#c0c0c0;"></div>
<span class="t" style="left:546.80px;top:124.00px;font-size:11px;color:#000;transform:scaleX(0.9750);">(Name)</span>
<span class="t" style="left:702.20px;top:124.00px;font-size:11px;color:#6d6d6d;transform:scaleX(0.9900);">Лист1</span>
<div style="left:546px;top:152px;width:300px;height:1px;background:#c0c0c0;"></div>
<span class="t" style="left:545.95px;top:140.00px;font-size:11px;color:#000;transform:scaleX(0.9463);">DisplayPageBreaks</span>
<span class="t" style="left:701.26px;top:140.00px;font-size:11px;color:#6d6d6d;transform:scaleX(0.9423);">False</span>
<div style="left:546px;top:168px;width:300px;height:1px;background:#c0c0c0;"></div>
<span class="t" style="left:545.91px;top:156.00px;font-size:11px;color:#000;transform:scaleX(0.9923);">DisplayRightToLeft</span>
<span class="t" style="left:701.26px;top:156.00px;font-size:11px;color:#6d6d6d;transform:scaleX(0.9423);">False</span>
<div style="left:546px;top:184px;width:300px;height:1px;background:#c0c0c0;"></div>
<span class="t" style="left:545.93px;top:172.00px;font-size:11px;color:#000;transform:scaleX(0.9704);">EnableAutoFilter</span>
<span class="t" style="left:701.26px;top:172.00px;font-size:11px;color:#6d6d6d;transform:scaleX(0.9423);">False</span>
<div style="left:546px;top:200px;width:300px;height:1px;background:#c0c0c0;"></div>
<span class="t" style="left:545.93px;top:188.00px;font-size:11px;color:#000;transform:scaleX(0.9655);">EnableCalculation</span>
<span class="t" style="left:701.40px;top:188.00px;font-size:11px;color:#6d6d6d;transform:scaleX(1.0091);">True</span>
<div style="left:546px;top:216px;width:300px;height:1px;background:#c0c0c0;"></div>
<div style="left:546px;top:201px;width:153px;height:15px;overflow:hidden"><span class="t" style="left:-0.06px;top:3.00px;font-size:11px;color:#000;transform:scaleX(0.9600);">EnableFormatConditionsCalculation</span></div>
<span class="t" style="left:701.40px;top:204.00px;font-size:11px;color:#6d6d6d;transform:scaleX(1.0091);">True</span>
<div style="left:546px;top:232px;width:300px;height:1px;background:#c0c0c0;"></div>
<span class="t" style="left:545.93px;top:220.00px;font-size:11px;color:#000;transform:scaleX(0.9697);">EnableOutlining</span>
<span class="t" style="left:701.26px;top:220.00px;font-size:11px;color:#6d6d6d;transform:scaleX(0.9423);">False</span>
<div style="left:546px;top:248px;width:300px;height:1px;background:#c0c0c0;"></div>
<span class="t" style="left:545.93px;top:236.00px;font-size:11px;color:#000;transform:scaleX(0.9726);">EnablePivotTable</span>
<span class="t" style="left:701.26px;top:236.00px;font-size:11px;color:#6d6d6d;transform:scaleX(0.9423);">False</span>
<div style="left:546px;top:264px;width:300px;height:1px;background:#c0c0c0;"></div>
<span class="t" style="left:545.94px;top:252.00px;font-size:11px;color:#000;transform:scaleX(0.9603);">EnableSelection</span>
<span class="t" style="left:702.20px;top:252.00px;font-size:11px;color:#6d6d6d;transform:scaleX(0.9768);">0 - xlNoRestrictions</span>
<div style="left:546px;top:265px;width:153px;height:15px;background:#0078d7;"></div>
<div style="left:546px;top:280px;width:300px;height:1px;background:#c0c0c0;"></div>
<span class="t" style="left:545.93px;top:268.00px;font-size:11px;color:#fff;transform:scaleX(0.9679);">Name</span>
<span class="t" style="left:702.20px;top:268.00px;font-size:11px;color:#6d6d6d;transform:scaleX(0.9900);">Лист1</span>
<div style="left:546px;top:296px;width:300px;height:1px;background:#c0c0c0;"></div>
<span class="t" style="left:546.90px;top:284.00px;font-size:11px;color:#000;transform:scaleX(0.9353);">ScrollArea</span>
<div style="left:546px;top:312px;width:300px;height:1px;background:#c0c0c0;"></div>
<span class="t" style="left:546.90px;top:300.00px;font-size:11px;color:#000;transform:scaleX(0.9863);">StandardWidth</span>
<span class="t" style="left:702.20px;top:300.00px;font-size:11px;color:#6d6d6d;transform:scaleX(1.0524);">8,43</span>
<div style="left:546px;top:328px;width:300px;height:1px;background:#c0c0c0;"></div>
<span class="t" style="left:546.90px;top:316.00px;font-size:11px;color:#000;transform:scaleX(0.9000);">Visible</span>
<span class="t" style="left:702.20px;top:316.00px;font-size:11px;color:#6d6d6d;transform:scaleX(0.9591);">-1 - xlSheetVisible</span>
</div>
</body>
</html>
